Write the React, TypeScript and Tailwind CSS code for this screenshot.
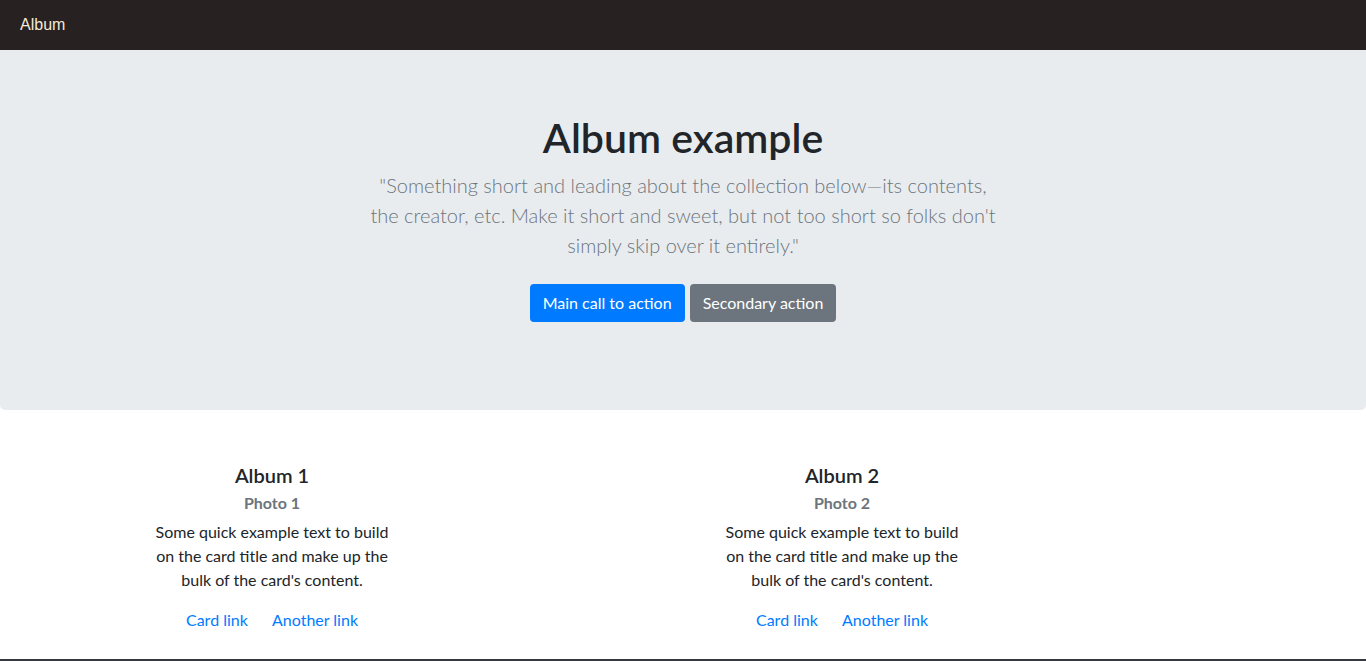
import React from 'react'

const font = { fontFamily: 'Lato, "Open Sans", sans-serif' }

function AlbumCard({ n }: { n: number }) {
  return (
    <div className="w-[288px] text-center">
      <div className="px-5 pt-[21px] pb-5">
        <h5 className="mb-3 text-[20px] leading-[24px] font-semibold text-[#212529]">Album {n}</h5>
        <h6 className="-mt-[6px] mb-2 text-[16px] leading-[19px] font-bold text-[#6c757d]">Photo {n}</h6>
        <p className="mb-4 text-[16px] leading-[24px] text-[#212529]">
          Some quick example text to build on the card title and make up the bulk of the card's content.
        </p>
        <div className="text-[16px] leading-[24px]">
          <a href="#" className="text-[#007bff]">Card link</a>{' '}
          <a href="#" className="ml-5 text-[#007bff]">Another link</a>
        </div>
      </div>
    </div>
  )
}

export default function App() {
  return (
    <div className="min-h-[661px] bg-white" style={font}>
      {/* Navbar */}
      <nav className="flex h-[50px] items-center bg-[#272121] px-5">
        <span className="text-[16px] text-[#f3ead8]" style={{ fontFamily: '"Liberation Sans", Arial, sans-serif' }}>
          Album
        </span>
      </nav>

      {/* Jumbotron */}
      <section className="mb-8 rounded-b-[5px] bg-[#e9ecef] px-8 pt-16 pb-[88px] text-center">
        <h1 className="mb-2 text-[41px] leading-[48px] font-semibold text-[#212529]">Album example</h1>
        <p className="mx-auto mb-6 max-w-[634px] text-[20px] leading-[30px] font-light text-[#6c757d]">
          "Something short and leading about the collection below—its contents, the creator, etc. Make it short and
          sweet, but not too short so folks don't simply skip over it entirely."
        </p>
        <div className="flex justify-center gap-[5px]">
          <button className="h-[38px] rounded-[4px] bg-[#007bff] px-[13px] text-[16px] text-white">
            Main call to action
          </button>
          <button className="h-[38px] rounded-[4px] bg-[#6c757d] px-[13px] text-[16px] text-white">
            Secondary action
          </button>
        </div>
      </section>

      {/* Cards */}
      <div className="mx-auto grid w-[1140px] grid-cols-2">
        <div className="px-[15px]">
          <AlbumCard n={1} />
        </div>
        <div className="px-[15px]">
          <AlbumCard n={2} />
        </div>
      </div>

      <div className="mt-[7px] h-[20px] bg-[#343a40]" />
    </div>
  )
}
